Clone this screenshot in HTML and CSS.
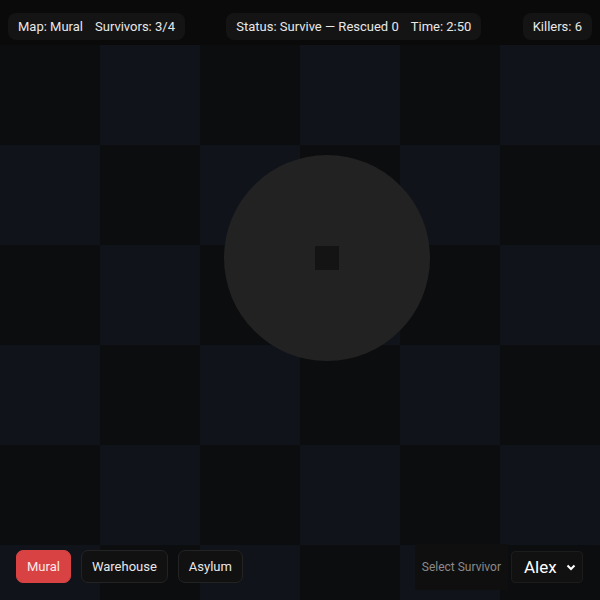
FILE: index.html
```html
<!DOCTYPE html>
<html lang="en">
<head>
  <meta charset="utf-8">
  <meta name="viewport" content="width=device-width, initial-scale=1.0">
  <title>Survive the Night</title>
  <link rel="stylesheet" href="styles.css">
</head>
<body>
  <div class="game">
    <div class="hud">
      <div class="pill">
        <span>Map: Mural</span>
        <span>Survivors: 3/4</span>
      </div>
      <div class="pill">
        <span>Status: Survive — Rescued 0</span>
        <span>Time: 2:50</span>
      </div>
      <div class="pill">
        <span>Killers: 6</span>
      </div>
    </div>

    <div class="board">
      <!-- safe zone with the survivor in the middle -->
      <div class="zone"></div>
      <div class="survivor"></div>

      <div class="controls">
        <div class="maps">
          <button class="map-btn active">Mural</button>
          <button class="map-btn">Warehouse</button>
          <button class="map-btn">Asylum</button>
        </div>
        <div class="picker">
          <span class="picker-label">Select Survivor</span>
          <div class="select">
            <span>Alex</span>
            <svg viewBox="0 0 10 10" width="10" height="10">
              <path d="M1.5 3.5 L5 7 L8.5 3.5" stroke="#fff" stroke-width="2" fill="none" />
            </svg>
          </div>
        </div>
      </div>
    </div>
  </div>
</body>
</html>
```

FILE: styles.css
```css
* {
  box-sizing: border-box;
  margin: 0;
  padding: 0;
}
body {
  font-family: Roboto, 'Noto Sans', sans-serif;
  background: #0b0b0c;
  color: #e8e8e8;
  width: 600px;
  height: 600px;
  overflow: hidden;
}
.game {
  display: flex;
  flex-direction: column;
  height: 100vh;
}
.hud {
  height: 45px;
  flex-shrink: 0;
  display: flex;
  justify-content: space-between;
  align-items: flex-start;
  padding: 13px 8px 0;
  background: #0a0a0b;
}
.pill {
  display: flex;
  gap: 12px;
  height: 27px;
  align-items: center;
  padding: 0 10px;
  background: #141415;
  border-radius: 8px;
  font-size: 13px;
}
.board {
  position: relative;
  flex: 1;
  background: repeating-conic-gradient(#10141a 0 25%, #0c0d0f 0 50%) 0 0 / 200px 200px;
  overflow: hidden;
}
.zone {
  position: absolute;
  left: 224px;
  top: 110px;
  width: 206px;
  height: 206px;
  border-radius: 50%;
  background: #222222;
}
.survivor {
  position: absolute;
  left: 315px;
  top: 201px;
  width: 24px;
  height: 24px;
  background: #141414;
}
.controls {
  position: absolute;
  left: 0;
  right: 0;
  bottom: 0;
  height: 67px;
  display: flex;
  justify-content: space-between;
  align-items: center;
  padding: 0 17px 0 16px;
}
.maps {
  display: flex;
  gap: 10px;
}
.map-btn {
  font-family: inherit;
  font-size: 13px;
  color: #e8e8e8;
  background: #111112;
  border: 1px solid #232324;
  border-radius: 7px;
  height: 33px;
  padding: 0 10px;
  cursor: pointer;
}
.map-btn.active {
  background: #d94242;
  border-color: #d94242;
  color: #fbeaea;
}
.picker {
  display: flex;
  align-items: center;
  gap: 3px;
}
.picker-label {
  display: flex;
  align-items: center;
  height: 46px;
  padding: 0 7px;
  font-size: 12px;
  color: #8a8a8a;
  background: #100f0f;
}
.select {
  display: flex;
  align-items: center;
  justify-content: space-between;
  width: 72px;
  height: 32px;
  padding: 0 6px 0 12px;
  background: #111112;
  border: 1px solid #1c1c1d;
  border-radius: 4px;
  font-size: 17px;
  color: #fff;
}
```
